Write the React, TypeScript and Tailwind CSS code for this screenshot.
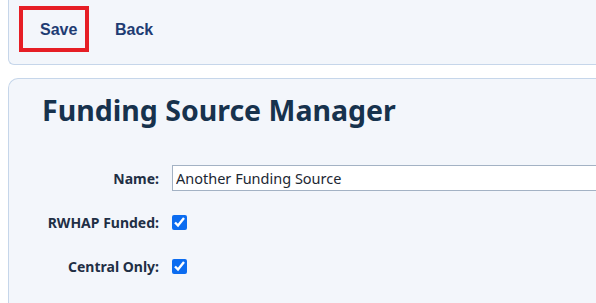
export default function App() {
    return (
        <div className="min-h-screen bg-white overflow-hidden" style={{ fontFamily: '"Noto Sans", "Open Sans", sans-serif' }}>
            <div className="ml-2 h-[65px] border-b border-l border-[#c6d6ea] rounded-bl-md bg-[#f3f6fb] flex items-start pt-[6px] pl-[10px]">
                <button className="h-[46px] w-[70px] border-4 border-[#e61e25] text-[#1f3c73] font-bold text-[16px] flex items-center pl-[17px] pt-[1px]" style={{ fontFamily: '"Liberation Sans", Arial, sans-serif' }}>
                    Save
                </button>
                <button className="ml-[26px] h-[46px] pt-[1px] text-[#1f3c73] font-bold text-[16px] flex items-center" style={{ fontFamily: '"Liberation Sans", Arial, sans-serif' }}>
                    Back
                </button>
            </div>
            <div className="ml-2 mt-[13px] h-[240px] border-t border-l border-[#c6d6ea] rounded-tl-[10px] bg-[#f3f6fb] pl-[33px] pt-[11px]">
                <h1 className="text-[28.5px] font-bold text-[#17324d] leading-[40px] whitespace-nowrap">Funding Source Manager</h1>
                <div className="mt-[35px] flex flex-col gap-[19px]">
                    <div className="flex items-center">
                        <label className="w-[130px] shrink-0 whitespace-nowrap text-right text-[14px] font-bold text-[#1f2f45] pr-[13px]">Name:</label>
                        <input
                            type="text"
                            defaultValue="Another Funding Source"
                            className="h-[26px] w-[600px] shrink-0 border border-[#a3b2c4] bg-white px-[3px] text-[14.5px] text-[#1c2733] outline-none"
                        />
                    </div>
                    <div className="flex items-center h-[25px]">
                        <label className="w-[130px] shrink-0 whitespace-nowrap text-right text-[14px] font-bold text-[#1f2f45] pr-[13px]">RWHAP Funded:</label>
                        <input type="checkbox" defaultChecked className="h-[15px] w-[15px] m-0 accent-[#0b6cf0]" />
                    </div>
                    <div className="flex items-center h-[25px]">
                        <label className="w-[130px] shrink-0 whitespace-nowrap text-right text-[14px] font-bold text-[#1f2f45] pr-[13px]">Central Only:</label>
                        <input type="checkbox" defaultChecked className="h-[15px] w-[15px] m-0 accent-[#0b6cf0]" />
                    </div>
                </div>
            </div>
        </div>
    );
}
